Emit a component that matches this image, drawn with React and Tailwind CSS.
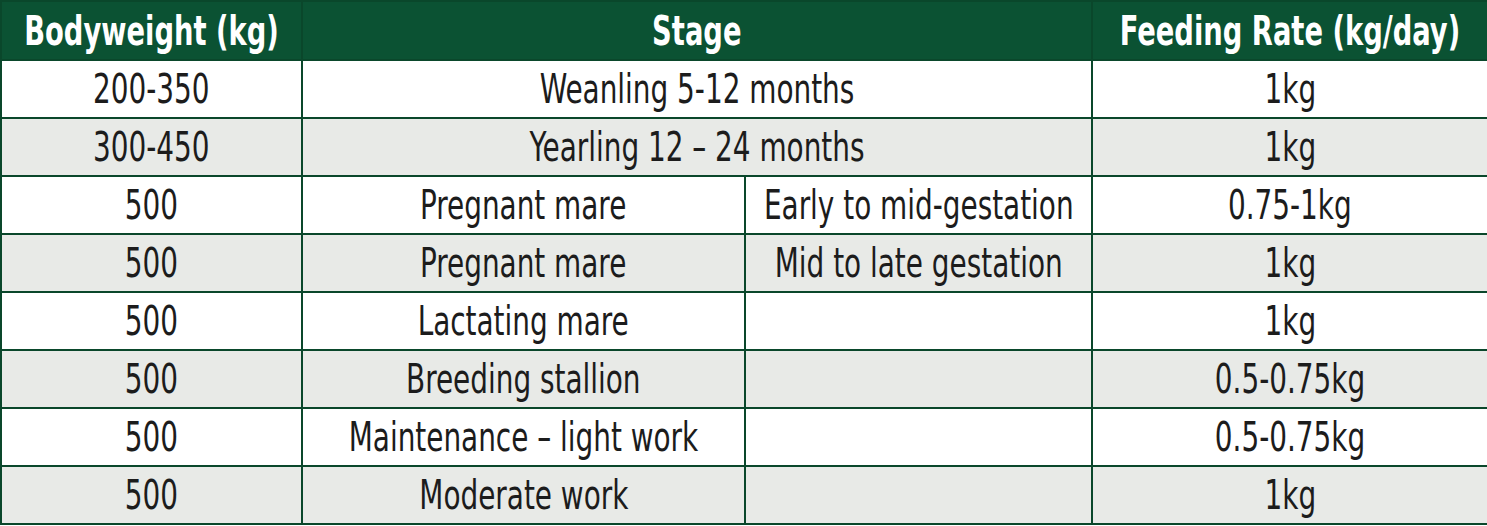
import React from 'react';

const rows = [
  { weight: '200-350', stage: 'Weanling 5-12 months', span: true, rate: '1kg' },
  { weight: '300-450', stage: 'Yearling 12 – 24 months', span: true, rate: '1kg' },
  { weight: '500', stage: 'Pregnant mare', detail: 'Early to mid-gestation', rate: '0.75-1kg' },
  { weight: '500', stage: 'Pregnant mare', detail: 'Mid to late gestation', rate: '1kg' },
  { weight: '500', stage: 'Lactating mare', detail: '', rate: '1kg' },
  { weight: '500', stage: 'Breeding stallion', detail: '', rate: '0.5-0.75kg' },
  { weight: '500', stage: 'Maintenance – light work', detail: '', rate: '0.5-0.75kg' },
  { weight: '500', stage: 'Moderate work', detail: '', rate: '1kg' },
];

// condensed look: DejaVu Sans Condensed squeezed a little more
function Txt({ children, head }) {
  return (
    <div className="flex justify-center">
      <span className={`inline-block shrink-0 whitespace-nowrap ${head ? 'scale-x-[0.76]' : 'scale-x-[0.775]'}`}>
        {children}
      </span>
    </div>
  );
}

function App() {
  const cell = 'border-2 border-[#0a472b] text-center align-middle p-0 leading-none whitespace-nowrap';

  return (
    <div className="w-[1487px] h-[526px] bg-white overflow-hidden">
      <table
        className="w-[1487px] border-collapse table-fixed text-[40px] text-[#1c1c1c]"
        style={{ fontFamily: '"DejaVu Sans Condensed", "DejaVu Sans", sans-serif' }}
      >
        <colgroup>
          <col className="w-[301px]" />
          <col className="w-[443px]" />
          <col className="w-[347px]" />
          <col className="w-[396px]" />
        </colgroup>
        <thead>
          {/* header row */}
          <tr className="h-[59px] bg-[#0b5233] text-white font-bold">
            <th className={cell}><Txt head>Bodyweight (kg)</Txt></th>
            <th className={cell} colSpan={2}><Txt head>Stage</Txt></th>
            <th className={cell}><Txt head>Feeding Rate (kg/day)</Txt></th>
          </tr>
        </thead>
        <tbody>
          {rows.map((r, i) => (
            <tr key={i} className={`h-[58px] ${i % 2 === 1 ? 'bg-[#e8eae7]' : 'bg-white'}`}>
              <td className={cell}><Txt>{r.weight}</Txt></td>
              {r.span ? (
                <td className={cell} colSpan={2}><Txt>{r.stage}</Txt></td>
              ) : (
                <>
                  <td className={cell}><Txt>{r.stage}</Txt></td>
                  <td className={cell}><Txt>{r.detail}</Txt></td>
                </>
              )}
              <td className={cell}><Txt>{r.rate}</Txt></td>
            </tr>
          ))}
        </tbody>
      </table>
    </div>
  );
}

export default App;
